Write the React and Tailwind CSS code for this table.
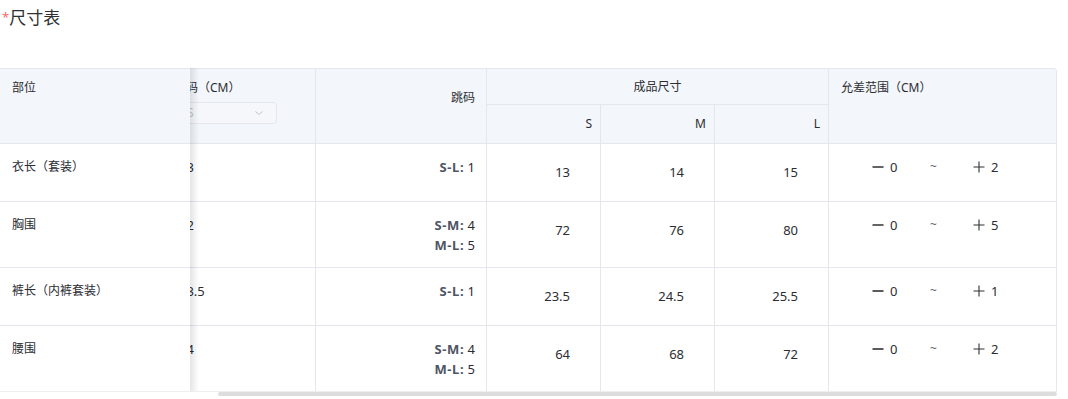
import React from "react";

const rows = [
  { name: "衣长（套装）", base: "13", jump: [["S-L:", "1"]], vals: ["13", "14", "15"], minus: "0", plus: "2", h: "h-[58px]" },
  { name: "胸围", base: "72", jump: [["S-M:", "4"], ["M-L:", "5"]], vals: ["72", "76", "80"], minus: "0", plus: "5", h: "h-[66px]" },
  { name: "裤长（内裤套装）", base: "23.5", jump: [["S-L:", "1"]], vals: ["23.5", "24.5", "25.5"], minus: "0", plus: "1", h: "h-[58px]" },
  { name: "腰围", base: "64", jump: [["S-M:", "4"], ["M-L:", "5"]], vals: ["64", "68", "72"], minus: "0", plus: "2", h: "h-[65px]" },
];

const B = "border-[#e4e7ed]";

function Minus() {
  return (
    <svg width="12" height="12" viewBox="0 0 12 12" className="mt-[4px]">
      <path d="M0.5 6 H11.5" stroke="#303133" strokeWidth="1.6" />
    </svg>
  );
}
function Plus() {
  return (
    <svg width="12" height="12" viewBox="0 0 12 12" className="mt-[4px]">
      <path d="M0.5 6 H11.5 M6 0.5 V11.5" stroke="#303133" strokeWidth="1.1" />
    </svg>
  );
}

export default function App() {
  return (
    <div
      className="w-[1068px] h-[399px] bg-white text-[#2b2d33] overflow-hidden"
      style={{ fontFamily: '"Noto Sans", "Noto Sans CJK SC", sans-serif' }}
    >
      <div className="h-[68px] pt-[7px] pl-[2px] flex items-start">
        <span className="text-[#f56c6c] text-[13px] leading-[14px] mt-[3px]">*</span>
        <span className="text-[17px] leading-[22px] text-[#303133]">尺寸表</span>
      </div>

      <div className="relative w-[1057px]">
        <div className={`grid grid-cols-[190px_126px_171px_114px_114px_114px_228px] border-t border-r ${B} rounded-tr-[4px] overflow-hidden text-[12px]`}>
          {/* header */}
          <div className={`row-span-2 h-[75px] bg-[#f3f6fa] border-b ${B} pl-[12px] pt-[10px] leading-[18px]`}>部位</div>
          <div className={`row-span-2 h-[75px] bg-[#f3f6fa] border-b border-r ${B} overflow-hidden`}>
            <div className="ml-[-16px] pt-[10px]">
              <div className="leading-[18px] whitespace-nowrap">基码（CM）</div>
              <div className="mt-[5px] w-[103px] h-[22px] rounded-[4px] border border-[#e4e7ed] bg-[#f5f7fa] flex items-center justify-between pl-[12px] pr-[12px]">
                <span className="text-[#c0c4cc]">S</span>
                <svg width="10" height="10" viewBox="0 0 10 10" fill="none">
                  <path d="M1.5 3.5 L5 6.5 L8.5 3.5" stroke="#c0c4cc" strokeWidth="1" />
                </svg>
              </div>
            </div>
          </div>
          <div className={`row-span-2 h-[75px] bg-[#f3f6fa] border-b border-r ${B} pr-[11px] pt-[20px] leading-[18px] text-right`}>跳码</div>
          <div className={`col-span-3 h-[36px] bg-[#f3f6fa] border-b border-r ${B} flex items-center justify-center leading-[18px]`}>成品尺寸</div>
          <div className={`row-span-2 h-[75px] bg-[#f3f6fa] border-b ${B} pl-[12px] pt-[10px] leading-[18px]`}>允差范围（CM）</div>
          {["S", "M", "L"].map((s) => (
            <div key={s} className={`h-[39px] bg-[#f3f6fa] border-b border-r ${B} flex items-center justify-end pr-[8px]`}>{s}</div>
          ))}

          {/* body */}
          {rows.map((r, i) => {
            const last = i === rows.length - 1;
            const bb = last ? "" : `border-b ${B}`;
            return (
              <React.Fragment key={r.name}>
                <div className={`${r.h} ${bb} bg-white pl-[12px] pt-[13px] leading-[20px]`}>{r.name}</div>
                <div className={`${r.h} ${bb} border-r ${B} overflow-hidden bg-white`}>
                  <div className="ml-[-11px] pt-[13px] leading-[20px] text-[13px]">{r.base}</div>
                </div>
                <div className={`${r.h} ${bb} border-r ${B} pr-[11px] pt-[13px] leading-[20px] text-right text-[13px]`}>
                  {r.jump.map(([k, v]) => (
                    <div key={k}>
                      <span className="font-bold text-[#4e5465] tracking-[0.6px]">{k}</span> {v}
                    </div>
                  ))}
                </div>
                {r.vals.map((v, j) => (
                  <div key={j} className={`${r.h} ${bb} border-r ${B} pt-[13px] pr-[30px] text-[13px]`}>
                    <div className="h-[32px] flex items-center justify-end">{v}</div>
                  </div>
                ))}
                <div className={`${r.h} ${bb} pl-[12px] pt-[13px] leading-[20px] flex text-[13px]`}>
                  <span className="w-[31px]" />
                  <span className="w-[18px]"><Minus /></span>
                  <span className="w-[40px]">{r.minus}</span>
                  <span className="w-[43px] text-[#606266] text-[12px]">~</span>
                  <span className="w-[18px]"><Plus /></span>
                  <span>{r.plus}</span>
                </div>
              </React.Fragment>
            );
          })}
        </div>

        <div className="pointer-events-none absolute left-[190px] top-0 bottom-[5px] w-[9px] bg-[linear-gradient(to_right,rgba(0,0,0,0.10),rgba(0,0,0,0))]" />

        <div className="h-[5px] flex border-t border-[#eeeeee]">
          <div className="w-[218px]" />
          <div className="flex-1 bg-[#dddddd] rounded-[3px]" />
        </div>
      </div>
    </div>
  );
}
